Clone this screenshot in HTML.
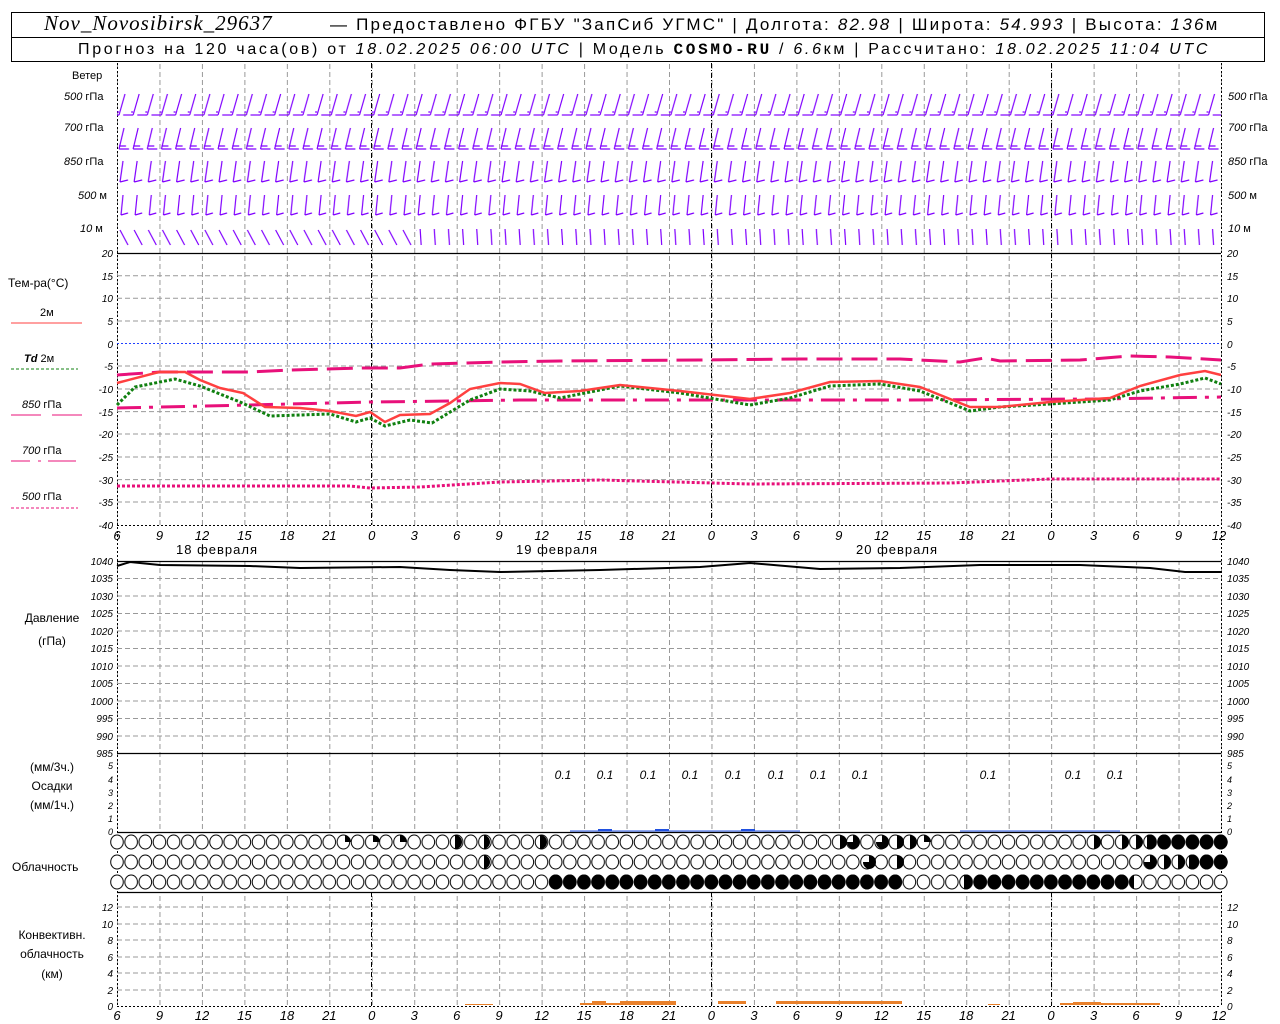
<!DOCTYPE html>
<html><head><meta charset="utf-8"><style>
html,body{margin:0;padding:0;background:#fff;}
svg{display:block;}
.t{font-family:"Liberation Sans",sans-serif;fill:#000;}
.i{font-family:"Liberation Sans",sans-serif;font-style:italic;fill:#000;}
</style></head><body>
<svg width="1280" height="1024" viewBox="0 0 1280 1024" xmlns="http://www.w3.org/2000/svg">
<defs>
<pattern id="vg" x="117" y="0" width="42.4615" height="8" patternUnits="userSpaceOnUse"><line x1="0.5" y1="0" x2="0.5" y2="5" stroke="#999" stroke-width="1"/></pattern>
<pattern id="w1" x="117" y="93" width="14.15" height="25" patternUnits="userSpaceOnUse"><path d="M2 22 L8 1 M2 22 L-8 22 M2 19 L-5 19" stroke="#8000ff" stroke-width="1.2" fill="none"/><path d="M16.15 22 L6.15 22" stroke="#8000ff" stroke-width="1.2"/></pattern>
<pattern id="w2" x="117" y="127" width="14.15" height="25" patternUnits="userSpaceOnUse"><path d="M2 22 L7 1 M2 22 L12 22 M2 19 L9 19" stroke="#8000ff" stroke-width="1.2" fill="none"/></pattern>
<pattern id="w3" x="117" y="160" width="14.15" height="25" patternUnits="userSpaceOnUse"><path d="M3 22 L6 1 M3 22 L11 20" stroke="#8000ff" stroke-width="1.2" fill="none"/></pattern>
<pattern id="w4" x="117" y="194" width="14.15" height="25" patternUnits="userSpaceOnUse"><path d="M4 21 L6 1 M4 21 L11 19" stroke="#8000ff" stroke-width="1.2" fill="none"/></pattern>
<pattern id="w5" x="117" y="228" width="14.15" height="20" patternUnits="userSpaceOnUse"><path d="M3 2 L11 17" stroke="#8000ff" stroke-width="1.2" fill="none"/></pattern>
<pattern id="w6" x="117" y="228" width="14.15" height="20" patternUnits="userSpaceOnUse"><path d="M6 1 L7 17" stroke="#8000ff" stroke-width="1.2" fill="none"/></pattern>
<pattern id="co" x="110" y="834" width="14.15" height="20" patternUnits="userSpaceOnUse"><ellipse cx="7" cy="8" rx="6.3" ry="7" fill="#fff" stroke="#000" stroke-width="1"/></pattern>
<pattern id="cf" x="110" y="834" width="14.15" height="20" patternUnits="userSpaceOnUse"><ellipse cx="7" cy="8" rx="6.3" ry="7" fill="#000" stroke="#000" stroke-width="1"/></pattern>
</defs>

<!-- header -->
<rect x="11.5" y="12.5" width="1253" height="49" fill="none" stroke="#000"/>
<line x1="11" y1="37.5" x2="1265" y2="37.5" stroke="#000"/>
<text x="44" y="30" font-size="21" font-family="Liberation Serif,serif" font-style="italic" letter-spacing="1">Nov_Novosibirsk_29637</text>
<text x="330" y="30" class="t" font-size="17" letter-spacing="2.2">— Предоставлено ФГБУ "ЗапСиб УГМС" | Долгота: <tspan class="i">82.98</tspan> | Широта: <tspan class="i">54.993</tspan> | Высота: <tspan class="i">136</tspan>м</text>
<text x="78" y="54" class="t" font-size="16" letter-spacing="2.7">Прогноз на 120 часа(ов) от <tspan class="i">18.02.2025 06:00 UTC</tspan>  | Модель <tspan font-family="Liberation Mono,monospace" font-weight="bold">COSMO-RU</tspan> / <tspan class="i">6.6</tspan>км | Рассчитано: <tspan class="i">18.02.2025 11:04 UTC</tspan></text>

<!-- vertical grids -->
<rect x="116" y="63" width="1106" height="462" fill="url(#vg)"/>
<rect x="116" y="561" width="1106" height="271" fill="url(#vg)"/>
<rect x="116" y="892" width="1106" height="114" fill="url(#vg)"/>
<g stroke="#000" stroke-dasharray="5,2,1,2" stroke-width="1">
<path d="M371.5 63V525M711.5 63V525M1051.5 63V525M371.5 892V1006M711.5 892V1006M1051.5 892V1006"/>
</g>
<g stroke="#000" stroke-dasharray="2,2"><path d="M117.5 63V1006M1221.5 63V1006"/></g>

<!-- horizontal grids -->
<g stroke="#999" stroke-dasharray="5,3" fill="none">
<path d="M117 275.7H1221M117 298.3H1221M117 321H1221M117 366H1221M117 389H1221M117 411.6H1221M117 434H1221M117 457H1221M117 479.6H1221M117 502H1221"/>
<path d="M117 578.5H1221M117 596H1221M117 613.5H1221M117 631H1221M117 648.5H1221M117 666H1221M117 683.5H1221M117 701H1221M117 718.5H1221M117 736H1221"/>
<path d="M117 907H1221M117 924H1221M117 940H1221M117 957H1221M117 973H1221M117 990H1221"/>
</g>
<line x1="117" y1="343.5" x2="1221" y2="343.5" stroke="#2040ff" stroke-dasharray="2,2"/>
<g stroke="#000" stroke-width="1.3">
<path d="M117 253.5H1221M117 561.5H1221M117 753.5H1221M117 832.5H1221M117 892.5H1221"/>
</g>
<g stroke="#000" stroke-dasharray="2,2"><path d="M117 525.5H1221M117 1006.5H1221"/></g>

<!-- wind barbs -->
<rect x="117" y="93" width="1104" height="25" fill="url(#w1)"/>
<rect x="117" y="127" width="1104" height="25" fill="url(#w2)"/>
<rect x="117" y="160" width="1104" height="25" fill="url(#w3)"/>
<rect x="117" y="194" width="1104" height="25" fill="url(#w4)"/>
<rect x="117" y="228" width="300" height="20" fill="url(#w5)"/>
<rect x="417" y="228" width="804" height="20" fill="url(#w6)"/>

<!-- wind labels -->
<g class="t" font-size="11">
<text x="72" y="79">Ветер</text>
<text x="64" y="100"><tspan class="i">500</tspan> гПа</text>
<text x="64" y="131"><tspan class="i">700</tspan> гПа</text>
<text x="64" y="165"><tspan class="i">850</tspan> гПа</text>
<text x="78" y="199"><tspan class="i">500</tspan> м</text>
<text x="80" y="232"><tspan class="i">10</tspan>  м</text>
<text x="1228" y="100"><tspan class="i">500</tspan> гПа</text>
<text x="1228" y="131"><tspan class="i">700</tspan> гПа</text>
<text x="1228" y="165"><tspan class="i">850</tspan> гПа</text>
<text x="1228" y="199"><tspan class="i">500</tspan> м</text>
<text x="1228" y="232"><tspan class="i">10</tspan>  м</text>
</g>

<!-- temp legend -->
<g class="t" font-size="12">
<text x="8" y="287">Тем-ра(°С)</text>
<text x="40" y="316" font-size="11">2м</text>
<text x="24" y="362" font-size="11"><tspan class="i" font-weight="bold">Td</tspan>  2м</text>
<text x="22" y="408" font-size="11"><tspan class="i">850</tspan> гПа</text>
<text x="22" y="454" font-size="11"><tspan class="i">700</tspan> гПа</text>
<text x="22" y="500" font-size="11"><tspan class="i">500</tspan> гПа</text>
</g>
<line x1="11" y1="323" x2="82" y2="323" stroke="#ff4040"/>
<line x1="11" y1="369" x2="78" y2="369" stroke="#108010" stroke-dasharray="3,2"/>
<path d="M11 415H41M52 415H82" stroke="#e8107a"/>
<path d="M11 461H30M38 461H41M48 461H76" stroke="#e8107a"/>
<line x1="11" y1="508" x2="78" y2="508" stroke="#e8107a" stroke-dasharray="3,2"/>

<!-- temp y labels -->
<g class="i" font-size="10" text-anchor="end">
<text x="113" y="257">20</text><text x="113" y="280">15</text><text x="113" y="302">10</text><text x="113" y="325">5</text><text x="113" y="348">0</text><text x="113" y="370">-5</text><text x="113" y="393">-10</text><text x="113" y="416">-15</text><text x="113" y="438">-20</text><text x="113" y="461">-25</text><text x="113" y="484">-30</text><text x="113" y="506">-35</text><text x="113" y="529">-40</text>
</g>
<g class="i" font-size="10">
<text x="1227" y="257">20</text><text x="1227" y="280">15</text><text x="1227" y="302">10</text><text x="1227" y="325">5</text><text x="1227" y="348">0</text><text x="1227" y="370">-5</text><text x="1227" y="393">-10</text><text x="1227" y="416">-15</text><text x="1227" y="438">-20</text><text x="1227" y="461">-25</text><text x="1227" y="484">-30</text><text x="1227" y="506">-35</text><text x="1227" y="529">-40</text>
</g>

<!-- temp curves -->
<polyline fill="none" stroke="#e8107a" stroke-width="3" stroke-dasharray="26,9" points="117,375 160,372 250,372 290,370 360,368 400,368 430,364 500,362 560,361 700,360 800,359 900,359 960,362 985,358 1000,361 1080,360 1130,356 1170,357 1221,360"/>
<polyline fill="none" stroke="#e8107a" stroke-width="3" stroke-dasharray="24,8,4,8" points="117,408 250,405 370,402 450,401 520,400 700,400 900,400 1100,399 1221,397"/>
<polyline fill="none" stroke="#e8107a" stroke-width="3" stroke-dasharray="3,2" points="117,486 350,486 370,488 420,487 500,482 600,480 750,484 950,483 1050,479 1221,479"/>
<polyline fill="none" stroke="#108010" stroke-width="3" stroke-dasharray="3,2" points="117,405 135,387 175,379 200,386 240,402 270,416 330,414 356,422 370,418 385,426 410,420 432,423 470,400 500,389 530,391 560,398 620,386 680,393 750,405 790,398 830,386 880,384 920,391 970,411 1000,407 1050,404 1110,400 1140,391 1180,384 1205,378 1221,384"/>
<polyline fill="none" stroke="#ff4040" stroke-width="2.5" points="117,383 159,372 185,372 200,380 220,388 243,393 265,407 300,408 330,411 356,416 370,412 385,422 400,415 430,414 450,403 470,389 500,383 520,384 545,393 580,391 620,385 680,391 750,399 790,393 830,382 880,381 920,387 970,407 1000,407 1050,402 1110,398 1140,386 1180,375 1205,371 1221,375"/>

<!-- time axis labels (temp) -->
<g class="i" font-size="13" text-anchor="middle">
<text x="117" y="540">6</text><text x="159.5" y="540">9</text><text x="202" y="540">12</text><text x="244.4" y="540">15</text><text x="287" y="540">18</text><text x="329.3" y="540">21</text><text x="371.8" y="540">0</text><text x="414.2" y="540">3</text><text x="456.7" y="540">6</text><text x="499" y="540">9</text><text x="541.6" y="540">12</text><text x="584" y="540">15</text><text x="626.5" y="540">18</text><text x="669" y="540">21</text><text x="711.4" y="540">0</text><text x="754" y="540">3</text><text x="796.4" y="540">6</text><text x="838.8" y="540">9</text><text x="881.3" y="540">12</text><text x="923.7" y="540">15</text><text x="966.2" y="540">18</text><text x="1008.7" y="540">21</text><text x="1051" y="540">0</text><text x="1093.6" y="540">3</text><text x="1136" y="540">6</text><text x="1178.5" y="540">9</text><text x="1219" y="540">12</text>
</g>
<g class="t" font-size="13" letter-spacing="1">
<text x="176" y="554">18 февраля</text><text x="516" y="554">19 февраля</text><text x="856" y="554">20 февраля</text>
</g>

<!-- pressure -->
<g class="t" font-size="12" text-anchor="middle"><text x="52" y="622">Давление</text><text x="52" y="645">(гПа)</text></g>
<g class="i" font-size="10" text-anchor="end">
<text x="113" y="565">1040</text><text x="113" y="582">1035</text><text x="113" y="600">1030</text><text x="113" y="617">1025</text><text x="113" y="635">1020</text><text x="113" y="652">1015</text><text x="113" y="670">1010</text><text x="113" y="687">1005</text><text x="113" y="705">1000</text><text x="113" y="722">995</text><text x="113" y="740">990</text><text x="113" y="757">985</text>
</g>
<g class="i" font-size="10">
<text x="1227" y="565">1040</text><text x="1227" y="582">1035</text><text x="1227" y="600">1030</text><text x="1227" y="617">1025</text><text x="1227" y="635">1020</text><text x="1227" y="652">1015</text><text x="1227" y="670">1010</text><text x="1227" y="687">1005</text><text x="1227" y="705">1000</text><text x="1227" y="722">995</text><text x="1227" y="740">990</text><text x="1227" y="757">985</text>
</g>
<polyline fill="none" stroke="#000" stroke-width="2" points="117,566 130,562 160,565 250,566 300,568 400,567 450,570 500,572 600,570 700,567 750,563 820,569 900,568 980,565 1080,565 1150,568 1185,572 1221,572"/>

<!-- precip -->
<g class="t" font-size="12" text-anchor="middle"><text x="52" y="771">(мм/3ч.)</text><text x="52" y="790">Осадки</text><text x="52" y="809">(мм/1ч.)</text></g>
<g class="i" font-size="9" text-anchor="end">
<text x="113" y="769">5</text><text x="113" y="783">4</text><text x="113" y="796">3</text><text x="113" y="809">2</text><text x="113" y="822">1</text><text x="113" y="835">0</text></g>
<g class="i" font-size="9">
<text x="1227" y="769">5</text><text x="1227" y="783">4</text><text x="1227" y="796">3</text><text x="1227" y="809">2</text><text x="1227" y="822">1</text><text x="1227" y="835">0</text></g>
<g class="i" font-size="12" text-anchor="middle">
<text x="563" y="779">0.1</text><text x="605" y="779">0.1</text><text x="648" y="779">0.1</text><text x="690" y="779">0.1</text><text x="733" y="779">0.1</text><text x="776" y="779">0.1</text><text x="818" y="779">0.1</text><text x="860" y="779">0.1</text><text x="988" y="779">0.1</text><text x="1073" y="779">0.1</text><text x="1115" y="779">0.1</text></g>
<path d="M570 831H800M960 831H1120" stroke="#2050e0" stroke-width="1"/>
<path d="M598 830H612M655 830H669M741 830H755" stroke="#2050e0" stroke-width="2"/>

<!-- clouds -->
<text x="12" y="871" class="t" font-size="12">Облачность</text>
<rect x="110" y="834" width="1118" height="16" fill="url(#co)"/>
<rect x="110" y="854" width="1118" height="16" fill="url(#co)"/>
<rect x="110" y="874" width="1118" height="16" fill="url(#co)"/>
<rect x="549" y="874" width="354" height="16" fill="url(#cf)"/>
<rect x="964" y="874" width="170" height="16" fill="url(#cf)"/>
<rect x="1147" y="834" width="81" height="16" fill="url(#cf)"/>
<rect x="1189" y="854" width="39" height="16" fill="url(#cf)"/>
<g fill="#000">
<path d="M345 842V835A7 7 0 0 1 351 842Z"/><path d="M373 842V835A7 7 0 0 1 380 842Z"/><path d="M400 842V835A7 7 0 0 1 407 842Z"/><path d="M455 842V835A7 7 0 0 1 462 842ZM455 842H462A7 7 0 0 1 455 849Z"/><path d="M484 842V835A7 7 0 0 1 490 842ZM484 842H490A7 7 0 0 1 484 849Z"/><path d="M540 835A7 7 0 0 1 540 849Z"/>
<path d="M484 862V855A7 7 0 0 1 490 862ZM484 862H490A7 7 0 0 1 484 869Z"/>
<path d="M840 835A7 7 0 0 1 840 849Z"/><path d="M853 835A7 7 0 0 1 853 849ZM853 842H847A7 7 0 0 0 853 849Z"/><path d="M882 835A7 7 0 0 1 882 849ZM882 842H876A7 7 0 0 0 882 849Z"/><path d="M897 835A7 7 0 0 1 897 849Z"/><path d="M910 835A7 7 0 0 1 910 849Z"/><path d="M924 842V835A7 7 0 0 1 931 842Z"/><path d="M1094 835A7 7 0 0 1 1094 849Z"/><path d="M1122 835A7 7 0 0 1 1122 849Z"/><path d="M1136 835A7 7 0 0 1 1136 849Z"/>
<path d="M869 855A7 7 0 0 1 869 869ZM869 862H863A7 7 0 0 0 869 869Z"/><path d="M897 855A7 7 0 0 1 897 869Z"/><path d="M1150 855A7 7 0 0 1 1150 869ZM1150 862H1144A7 7 0 0 0 1150 869Z"/><path d="M1164 855A7 7 0 0 1 1164 869Z"/><path d="M1178 855A7 7 0 0 1 1178 869Z"/>
</g>

<!-- convective -->
<g class="t" font-size="12" text-anchor="middle"><text x="52" y="939">Конвективн.</text><text x="52" y="958">облачность</text><text x="52" y="978">(км)</text></g>
<g class="i" font-size="10" text-anchor="end">
<text x="113" y="911">12</text><text x="113" y="928">10</text><text x="113" y="944">8</text><text x="113" y="961">6</text><text x="113" y="977">4</text><text x="113" y="994">2</text><text x="113" y="1010">0</text></g>
<g class="i" font-size="10">
<text x="1227" y="911">12</text><text x="1227" y="928">10</text><text x="1227" y="944">8</text><text x="1227" y="961">6</text><text x="1227" y="977">4</text><text x="1227" y="994">2</text><text x="1227" y="1010">0</text></g>
<g fill="#e8802a">
<rect x="580" y="1003" width="96" height="2"/><rect x="592" y="1001" width="14" height="3"/><rect x="620" y="1001" width="56" height="3"/>
<rect x="718" y="1001" width="28" height="3"/><rect x="776" y="1001" width="126" height="3"/>
<rect x="1060" y="1003" width="100" height="2"/><rect x="1073" y="1002" width="28" height="2"/>
<rect x="988" y="1004" width="12" height="1"/><rect x="465" y="1004" width="28" height="1"/>
</g>
<g class="i" font-size="13" text-anchor="middle">
<text x="117" y="1020">6</text><text x="159.5" y="1020">9</text><text x="202" y="1020">12</text><text x="244.4" y="1020">15</text><text x="287" y="1020">18</text><text x="329.3" y="1020">21</text><text x="371.8" y="1020">0</text><text x="414.2" y="1020">3</text><text x="456.7" y="1020">6</text><text x="499" y="1020">9</text><text x="541.6" y="1020">12</text><text x="584" y="1020">15</text><text x="626.5" y="1020">18</text><text x="669" y="1020">21</text><text x="711.4" y="1020">0</text><text x="754" y="1020">3</text><text x="796.4" y="1020">6</text><text x="838.8" y="1020">9</text><text x="881.3" y="1020">12</text><text x="923.7" y="1020">15</text><text x="966.2" y="1020">18</text><text x="1008.7" y="1020">21</text><text x="1051" y="1020">0</text><text x="1093.6" y="1020">3</text><text x="1136" y="1020">6</text><text x="1178.5" y="1020">9</text><text x="1219" y="1020">12</text>
</g>
</svg>
</body></html>
